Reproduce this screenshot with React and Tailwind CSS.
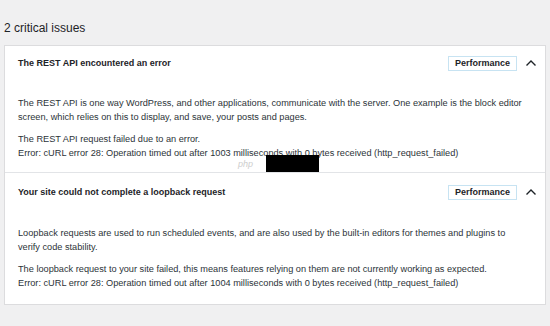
export default function App() {
  return (
    <div className="w-[550px] h-[326px] bg-[#f0f0f1] pt-[20px] font-['Liberation_Sans',Arial,sans-serif] text-[#1d2327]">
      <h2 className="px-[4px] text-[12px] leading-[16px] font-normal">2 critical issues</h2>
      <div className="relative mx-[4px] mt-[9px] border border-[#dcdcde] bg-white">
        <Issue
          title="The REST API encountered an error"
          headerClass="h-[34px]"
          bodyClass="pt-[16px] pb-[12px]"
          paragraphs={[
            ["The REST API is one way WordPress, and other applications, communicate with the server. One example is the block editor screen, which relies on this to display, and save, your posts and pages."],
            ["The REST API request failed due to an error.", "Error: cURL error 28: Operation timed out after 1003 milliseconds with 0 bytes received (http_request_failed)"],
          ]}
        />
        <div className="border-t border-[#e2e4e7]">
          <Issue
            title="Your site could not complete a loopback request"
            headerClass="h-[38px]"
            bodyClass="pt-[15px] pb-[14px]"
            paragraphs={[
              ["Loopback requests are used to run scheduled events, and are also used by the built-in editors for themes and plugins to verify code stability."],
              ["The loopback request to your site failed, this means features relying on them are not currently working as expected.", "Error: cURL error 28: Operation timed out after 1004 milliseconds with 0 bytes received (http_request_failed)"],
            ]}
          />
        </div>
        {/* watermark cover */}
        <span className="absolute left-[233px] top-[113px] text-[9px] leading-[10px] italic text-[#cdcdcd]">php</span>
        <div className="absolute left-[261px] top-[109px] w-[53px] h-[17px] bg-black"></div>
      </div>
    </div>
  )
}

function Issue({ title, headerClass, bodyClass, paragraphs }) {
  return (
    <div>
      <div className={"flex items-center pl-[13px] pr-[4px] " + headerClass}>
        <h3 className="flex-1 text-[9px] leading-[12px] font-bold text-[#1d2327]">{title}</h3>
        <span className="border border-[#c7e3f2] px-[6px] text-[9px] leading-[13px] font-bold text-[#1d2327]">
          Performance
        </span>
        <span className="ml-[4px] flex w-[20px] h-[20px] items-center justify-center text-[#1d2327]">
          <svg width="12" height="12" viewBox="0 0 12 12" fill="none" stroke="currentColor" strokeWidth="1.4">
            <path d="M1.5 8.5L6 4L10.5 8.5" />
          </svg>
        </span>
      </div>
      <div className={"pl-[13px] pr-[19px] text-[9.2px] leading-[14px] text-[#2c3338] " + bodyClass}>
        {paragraphs.map((lines, i) => (
          <p key={i} className={i > 0 ? "mt-[8px]" : ""}>
            {lines.map((l, j) => (
              <span key={j}>
                {j > 0 && <br />}
                {l}
              </span>
            ))}
          </p>
        ))}
      </div>
    </div>
  )
}
